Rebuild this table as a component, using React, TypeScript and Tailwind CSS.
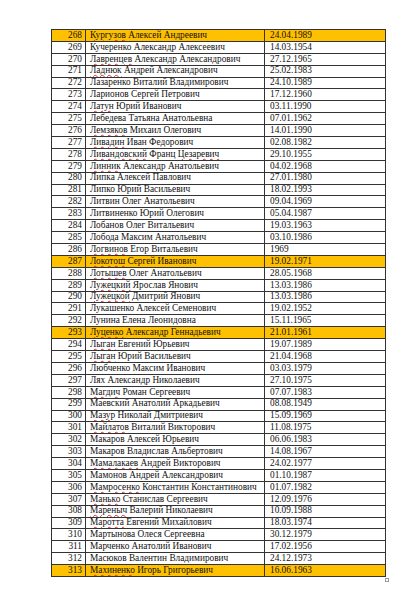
const rows: [number, string, string, number[], boolean?][] = [
  [268, "Кургузов Алексей Андреевич", "24.04.1989", [0], true],
  [269, "Кучеренко Александр Алексеевич", "14.03.1954", []],
  [270, "Лавренцев Александр Александрович", "27.12.1965", [0]],
  [271, "Ладнюк Андрей Александрович", "25.02.1983", [0]],
  [272, "Лазаренко Виталий Владимирович", "24.10.1989", []],
  [273, "Ларионов Сергей Петрович", "17.12.1960", []],
  [274, "Латун Юрий Иванович", "03.11.1990", [0]],
  [275, "Лебедева Татьяна Анатольевна", "07.01.1962", []],
  [276, "Лемзяков Михаил Олегович", "14.01.1990", [0]],
  [277, "Ливадин Иван Федорович", "02.08.1982", [0]],
  [278, "Ливандовский Франц Цезаревич", "29.10.1955", [0, 2]],
  [279, "Линник Александр Анатольевич", "04.02.1968", [0]],
  [280, "Липка Алексей Павлович", "27.01.1980", []],
  [281, "Липко Юрий Васильевич", "18.02.1993", []],
  [282, "Литвин Олег Анатольевич", "09.04.1969", []],
  [283, "Литвиненко Юрий Олегович", "05.04.1987", []],
  [284, "Лобанов Олег Витальевич", "19.03.1963", []],
  [285, "Лобода Максим Анатольевич", "03.10.1986", []],
  [286, "Логвинов Егор Витальевич", "1969", [0]],
  [287, "Локотош Сергей Иванович", "19.02.1971", [0], true],
  [288, "Лотышев Олег Анатольевич", "28.05.1968", [0]],
  [289, "Лужецкий Ярослав Янович", "13.03.1986", [0]],
  [290, "Лужецкой Дмитрий Янович", "13.03.1986", [0]],
  [291, "Лукашенко Алексей Семенович", "19.02.1952", []],
  [292, "Лунина Елена Леонидовна", "15.11.1965", []],
  [293, "Луценко Александр Геннадьевич", "21.01.1961", [0], true],
  [294, "Лыган Евгений Юрьевич", "19.07.1989", [0]],
  [295, "Лыган Юрий Васильевич", "21.04.1968", [0]],
  [296, "Любченко Максим Иванович", "03.03.1979", []],
  [297, "Лях Александр Николаевич", "27.10.1975", []],
  [298, "Магдич Роман Сергеевич", "07.07.1983", [0]],
  [299, "Маевский Анатолий Аркадьевич", "08.08.1949", []],
  [300, "Мазур Николай Дмитриевич", "15.09.1969", [0]],
  [301, "Майлатов Виталий Викторович", "11.08.1975", [0]],
  [302, "Макаров Алексей Юрьевич", "06.06.1983", []],
  [303, "Макаров Владислав Альбертович", "14.08.1967", []],
  [304, "Мамалакаев Андрей Викторович", "24.02.1977", [0]],
  [305, "Мамонов Андрей Александрович", "01.10.1987", []],
  [306, "Мамросенко Константин Константинович", "01.07.1982", [0]],
  [307, "Манько Станислав Сергеевич", "12.09.1976", [0]],
  [308, "Мареныч Валерий Николаевич", "10.09.1988", [0]],
  [309, "Маротта Евгений Михайлович", "18.03.1974", [0]],
  [310, "Мартынова Олеся Сергеевна", "30.12.1979", []],
  [311, "Марченко Анатолий Иванович", "17.02.1956", []],
  [312, "Масюков Валентин Владимирович", "24.12.1973", []],
  [313, "Махиненко Игорь Григорьевич", "16.06.1963", [0], true],
];

function Name({ text, marks }: { text: string; marks: number[] }) {
  const words = text.split(" ");
  return (
    <>
      {words.map((w, i) => (
        <span key={i}>
          {i > 0 && " "}
          {marks.includes(i) ? (
            <span className="underline decoration-wavy decoration-[#e03030] decoration-[0.5px] underline-offset-[1px]">{w}</span>
          ) : (
            w
          )}
        </span>
      ))}
    </>
  );
}

export default function App() {
  return (
    <div className="w-[418px] h-[610px] bg-white pt-[29px] pl-[51px] font-['Liberation_Serif',serif] text-[9.3px] text-[#111]">
      <div className="relative w-[334px]">
        <table className="w-[334px] border-collapse table-fixed">
          <colgroup>
            <col className="w-[34px]" />
            <col className="w-[179px]" />
            <col className="w-[121px]" />
          </colgroup>
          <tbody>
            {rows.map(([n, name, date, marks, hl]) => (
              <tr key={n} className={`h-[11.9px] leading-none ${hl ? "bg-[#ffc000]" : ""}`}>
                <td className="border border-[#333] text-right pr-[3px] p-0">{n}</td>
                <td className="border border-[#333] pl-[4px] p-0 whitespace-nowrap overflow-hidden">
                  <Name text={name} marks={marks} />
                </td>
                <td className="border border-[#333] pl-[5px] p-0">{date}</td>
              </tr>
            ))}
          </tbody>
        </table>
        <div className="absolute right-[-4px] bottom-[-5px] w-[4px] h-[4px] border border-[#9a9a9a] bg-white" />
      </div>
    </div>
  );
}
